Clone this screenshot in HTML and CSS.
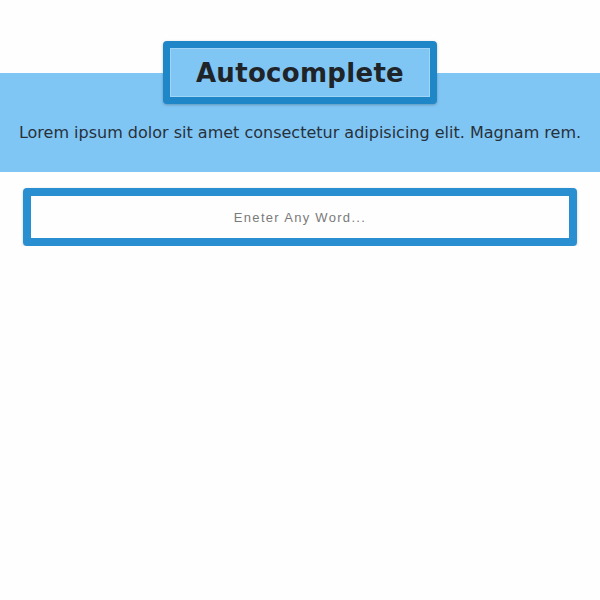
FILE: index.html
```html
<!DOCTYPE html>
<html>
<head>
<meta charset="utf-8">
<link rel="stylesheet" href="styles.css">
</head>
<body>
<header class="hero">
  <h1 class="title">Autocomplete</h1>
  <p class="lead">Lorem ipsum dolor sit amet consectetur adipisicing elit. Magnam rem.</p>
</header>
<main class="search">
  <input class="search-input" type="text" placeholder="Eneter Any Word...">
</main>
</body>
</html>
```
FILE: styles.css
```css
html, body {
  margin: 0;
  padding: 0;
  background: #fefefe;
}
body {
  font-family: "DejaVu Sans", "Open Sans", sans-serif;
}
.hero {
  display: flex;
  flex-direction: column;
  align-items: center;
  padding-top: 41px;
  height: 131px;
  box-sizing: content-box;
  background: linear-gradient(to bottom, #fefefe 73px, #80c6f5 73px);
}
.title {
  margin: 0;
  box-sizing: border-box;
  width: 274px;
  height: 63px;
  border: 7px solid #1f86c7;
  border-radius: 4px;
  background: #80c6f5;
  box-shadow: 0 1px 3px rgba(0,0,0,0.25), inset 0 0 0 1px rgba(255,255,255,0.25);
  font-size: 26px;
  font-weight: 700;
  color: #1f2428;
  display: flex;
  align-items: center;
  justify-content: center;
  letter-spacing: 0.3px;
}
.lead {
  margin: 17px 0 0;
  font-size: 16px;
  line-height: 24px;
  color: #27313a;
  white-space: nowrap;
}
.search {
  padding: 16px 23px 0;
}
.search-input {
  display: block;
  box-sizing: border-box;
  width: 100%;
  height: 58px;
  border: 8px solid #2a8fd0;
  border-radius: 4px;
  background: #fefefe;
  box-shadow: 0 1px 3px rgba(0,0,0,0.2);
  outline: none;
  text-align: center;
  font-family: "Liberation Sans", Arial, sans-serif;
  font-size: 13px;
  letter-spacing: 1.3px;
  color: #444;
}
.search-input::placeholder {
  color: #7a7a7a;
}
```
